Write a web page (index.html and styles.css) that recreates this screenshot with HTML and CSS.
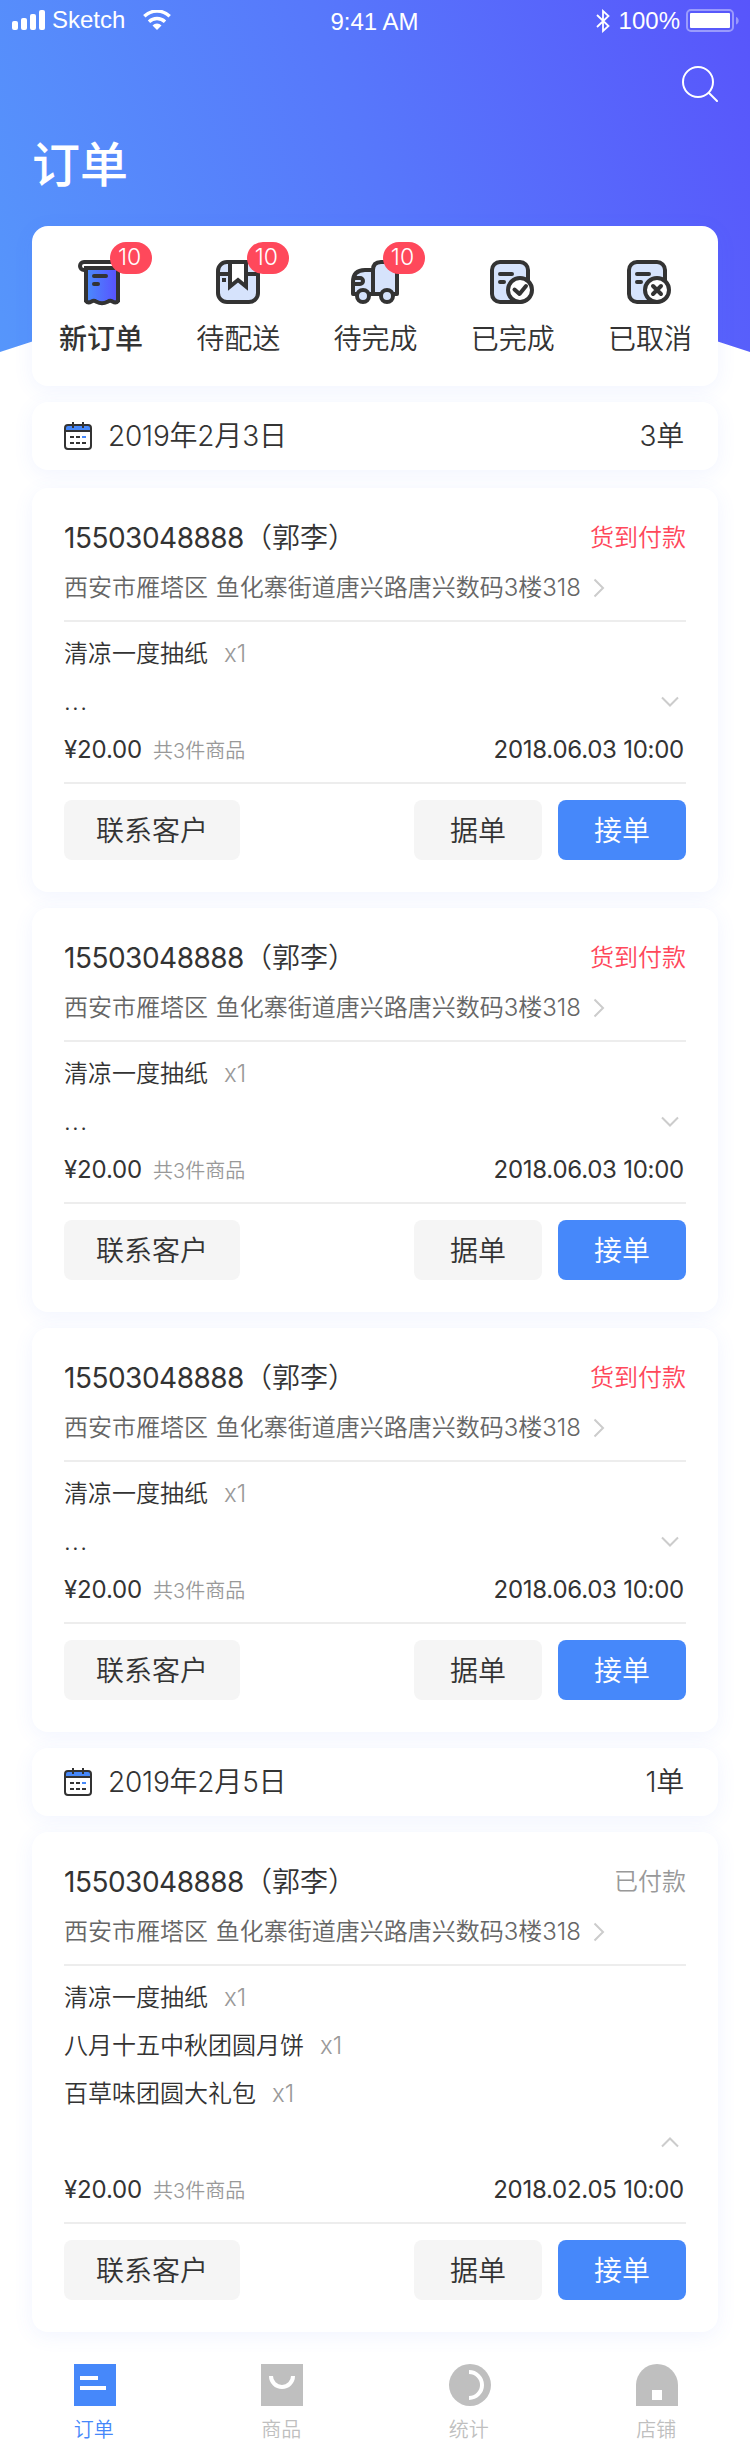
FILE: index.html
```
<!DOCTYPE html>
<html lang="zh-CN">
<head>
<meta charset="utf-8">
<title>订单</title>
<link rel="stylesheet" href="styles.css">
</head>
<body>
<svg class="defs" aria-hidden="true">
  <defs>
    <linearGradient id="paper" x1="0" y1="0" x2="1" y2="0"><stop offset="0" stop-color="#4a8cfb"/><stop offset="1" stop-color="#5950ff"/></linearGradient>
    <symbol id="calendar" viewBox="0 0 28 28">
      <rect x="1" y="3" width="26" height="24" rx="3" fill="#fff"/>
      <path d="M1 9V6a3 3 0 0 1 3-3h20a3 3 0 0 1 3 3v3z" fill="#4688fa"/>
      <path d="M1 9h26M9 0v6M19 0v6" stroke="#333" stroke-width="2"/>
      <rect x="1" y="3" width="26" height="24" rx="3" fill="none" stroke="#333" stroke-width="2"/>
      <path d="M6 15h4M12 15h4M6 21h4M12 21h4M18 21h4" stroke="#333" stroke-width="2"/>
      <path d="M18 15h4" stroke="#4688fa" stroke-width="2"/>
    </symbol>
    <symbol id="right" viewBox="0 0 12 20"><path d="M1.5 1.5L10 10l-8.500 8.500" fill="none" stroke="#ccc" stroke-width="2"/></symbol>
    <symbol id="down" viewBox="0 0 18 12"><path d="M1 1.500L9 9.500l8-8" fill="none" stroke="#ccc" stroke-width="2"/></symbol>
    <symbol id="up" viewBox="0 0 18 12"><path d="M1 10.500L9 2.500l8 8" fill="none" stroke="#ccc" stroke-width="2"/></symbol>
  </defs>
</svg>

<header class="header">
  <div class="status">
    <div class="status-left">
      <svg class="signal" viewBox="0 0 33 20" fill="#fff"><rect y="11" width="6" height="9" rx="2"/><rect x="9" y="8" width="6" height="12" rx="2"/><rect x="18" y="4" width="6" height="16" rx="2"/><rect x="27" width="6" height="20" rx="2"/></svg>
      <span class="carrier">Sketch</span>
      <svg class="wifi" viewBox="0 0 28 20"><path d="M1.300 6.300a18 18 0 0 1 25.400 0M6 11.700a11.500 11.500 0 0 1 16 0" fill="none" stroke="#fff" stroke-width="3.400"/><path d="M14 20l-4.500-4.600a6.500 6.500 0 0 1 9 0z" fill="#fff"/></svg>
    </div>
    <span class="clock">9:41 AM</span>
    <div class="status-right">
      <svg class="bluetooth" viewBox="0 0 14 24"><path d="M1 6l11.500 11L7 22V2l5.500 5L1 18" fill="none" stroke="#fff" stroke-width="1.800"/></svg>
      <span class="percent">100%</span>
      <svg class="battery" viewBox="0 0 53 24"><rect x="1" y="1" width="46" height="21" rx="4" fill="none" stroke="#fff" stroke-opacity=".4" stroke-width="2"/><rect x="4" y="4" width="40" height="15" rx="1" fill="#fff"/><path d="M50 8c3.600 1 3.600 6.500 0 7.500z" fill="#fff" fill-opacity=".4"/></svg>
    </div>
  </div>
  <svg class="search" viewBox="0 0 36 36"><circle cx="16" cy="16" r="15" fill="none" stroke="#fff" stroke-width="2"/><path d="M27 27l8 8" stroke="#fff" stroke-width="2" stroke-linecap="round"/></svg>
  <h1 class="title">订单</h1>
</header>

<main class="main">
  <section class="card tabs">
    <div class="tab active">
      <div class="tab-icon">
        <svg viewBox="0 0 44 46" width="44" height="46" fill="none" stroke="#333" stroke-width="4" stroke-linejoin="round" stroke-linecap="round">
          <rect x="2" y="2" width="40" height="8" rx="4" fill="#fff"/>
          <path d="M8 8v33q2 2.500 5.500.5 2.500-1.500 5 .3 5.500 3 11 0 2.500-1.800 5-.3 3.500 2 5.500-.5V8z" fill="url(#paper)" stroke-linejoin="miter"/>
          <path d="M16 16h12M16 24h4"/>
        </svg>
        <span class="badge">10</span>
      </div>
      <span class="tab-label">新订单</span>
    </div>
    <div class="tab">
      <div class="tab-icon">
        <svg viewBox="0 0 44 46" width="44" height="46" fill="none" stroke="#333" stroke-width="4">
          <rect x="2" y="2" width="40" height="40" rx="9" fill="#d6e3fc"/>
          <path d="M2 14h40"/><path d="M14 2v24.500l8-6.500 8 6.500V2z" fill="#fff"/>
          <rect x="6" y="18" width="4" height="4" fill="#333" stroke="none"/>
        </svg>
        <span class="badge">10</span>
      </div>
      <span class="tab-label">待配送</span>
    </div>
    <div class="tab">
      <div class="tab-icon wide">
        <svg viewBox="0 0 48 46" width="48" height="46" fill="none" stroke="#333" stroke-width="4" stroke-linejoin="round">
          <path d="M22 34H2V22Q2 10 14 10h8z" fill="#d6e3fc"/>
          <path d="M22 34V10q0-8 8-8h16v32z" fill="#d6e3fc"/>
          <path d="M2 18h7a3 3 0 0 1 0 6H2"/>
          <circle cx="12" cy="36" r="6" fill="#d6e3fc"/><circle cx="36" cy="36" r="6" fill="#d6e3fc"/>
        </svg>
        <span class="badge">10</span>
      </div>
      <span class="tab-label">待完成</span>
    </div>
    <div class="tab">
      <div class="tab-icon">
        <svg viewBox="0 0 44 46" width="44" height="46" fill="none" stroke="#333" stroke-width="4" stroke-linecap="round" stroke-linejoin="round">
          <rect x="2" y="2" width="36" height="40" rx="8" fill="#d6e3fc"/>
          <path d="M10 14h12M10 22h4"/><circle cx="30" cy="30" r="12" fill="#fff"/>
          <path d="M24.500 29.500l5 4.500 6.500-8"/>
        </svg>
      </div>
      <span class="tab-label">已完成</span>
    </div>
    <div class="tab">
      <div class="tab-icon">
        <svg viewBox="0 0 44 46" width="44" height="46" fill="none" stroke="#333" stroke-width="4" stroke-linecap="round" stroke-linejoin="round">
          <rect x="2" y="2" width="36" height="40" rx="8" fill="#d6e3fc"/>
          <path d="M10 14h12M10 22h4"/><circle cx="30" cy="30" r="12" fill="#fff"/>
          <path d="M26 26l8 8M34 26l-8 8"/>
        </svg>
      </div>
      <span class="tab-label">已取消</span>
    </div>
  </section>

  <section class="card day first-day">
    <svg class="cal"><use href="#calendar"/></svg><span class="day-date">2019年2月3日</span><span>3单</span>
  </section>

  <article class="card order">
    <div class="customer"><span><span class="phone">15503048888</span>（郭李）</span><span class="pay due">货到付款</span></div>
    <div class="address"><span>西安市雁塔区 鱼化寨街道唐兴路唐兴数码3楼318</span><svg class="arrow"><use href="#right"/></svg></div>
    <div class="details">
      <div class="row"><span>清凉一度抽纸</span><span class="qty">x1</span></div>
      <div class="row"><span class="more">...</span><svg class="fold"><use href="#down"/></svg></div>
      <div class="row"><span class="price">¥20.00</span><span class="count">共3件商品</span><time>2018.06.03 10:00</time></div>
    </div>
    <div class="actions"><button class="btn contact">联系客户</button><button class="btn">据单</button><button class="btn primary">接单</button></div>
  </article>

  <article class="card order">
    <div class="customer"><span><span class="phone">15503048888</span>（郭李）</span><span class="pay due">货到付款</span></div>
    <div class="address"><span>西安市雁塔区 鱼化寨街道唐兴路唐兴数码3楼318</span><svg class="arrow"><use href="#right"/></svg></div>
    <div class="details">
      <div class="row"><span>清凉一度抽纸</span><span class="qty">x1</span></div>
      <div class="row"><span class="more">...</span><svg class="fold"><use href="#down"/></svg></div>
      <div class="row"><span class="price">¥20.00</span><span class="count">共3件商品</span><time>2018.06.03 10:00</time></div>
    </div>
    <div class="actions"><button class="btn contact">联系客户</button><button class="btn">据单</button><button class="btn primary">接单</button></div>
  </article>

  <article class="card order">
    <div class="customer"><span><span class="phone">15503048888</span>（郭李）</span><span class="pay due">货到付款</span></div>
    <div class="address"><span>西安市雁塔区 鱼化寨街道唐兴路唐兴数码3楼318</span><svg class="arrow"><use href="#right"/></svg></div>
    <div class="details">
      <div class="row"><span>清凉一度抽纸</span><span class="qty">x1</span></div>
      <div class="row"><span class="more">...</span><svg class="fold"><use href="#down"/></svg></div>
      <div class="row"><span class="price">¥20.00</span><span class="count">共3件商品</span><time>2018.06.03 10:00</time></div>
    </div>
    <div class="actions"><button class="btn contact">联系客户</button><button class="btn">据单</button><button class="btn primary">接单</button></div>
  </article>

  <section class="card day">
    <svg class="cal"><use href="#calendar"/></svg><span class="day-date">2019年2月5日</span><span>1单</span>
  </section>

  <article class="card order">
    <div class="customer"><span><span class="phone">15503048888</span>（郭李）</span><span class="pay">已付款</span></div>
    <div class="address"><span>西安市雁塔区 鱼化寨街道唐兴路唐兴数码3楼318</span><svg class="arrow"><use href="#right"/></svg></div>
    <div class="details">
      <div class="row"><span>清凉一度抽纸</span><span class="qty">x1</span></div>
      <div class="row"><span>八月十五中秋团圆月饼</span><span class="qty">x1</span></div>
      <div class="row"><span>百草味团圆大礼包</span><span class="qty">x1</span></div>
      <div class="row"><svg class="fold"><use href="#up"/></svg></div>
      <div class="row"><span class="price">¥20.00</span><span class="count">共3件商品</span><time>2018.02.05 10:00</time></div>
    </div>
    <div class="actions"><button class="btn contact">联系客户</button><button class="btn">据单</button><button class="btn primary">接单</button></div>
  </article>
</main>

<nav class="nav">
  <a class="nav-item current"><svg class="nav-icon" viewBox="0 0 42 42"><path d="M0 0h42v42H0z" fill="#4688fa"/><path d="M6 14h18M6 24h26" stroke="#fff" stroke-width="4"/></svg><span>订单</span></a>
  <a class="nav-item"><svg class="nav-icon" viewBox="0 0 42 42"><path d="M0 0h42v42H0z" fill="#bfbfbf"/><path d="M10 12a11 11 0 0 0 22 0" fill="none" stroke="#fff" stroke-width="4"/></svg><span>商品</span></a>
  <a class="nav-item"><svg class="nav-icon" viewBox="0 0 42 42"><circle cx="21" cy="21" r="21" fill="#bfbfbf"/><path d="M20 8a13 13 0 0 1 0 26" fill="none" stroke="#fff" stroke-width="4"/></svg><span>统计</span></a>
  <a class="nav-item"><svg class="nav-icon" viewBox="0 0 42 42"><path d="M0 42V21a21 21 0 0 1 42 0v21z" fill="#bfbfbf"/><path d="M16 26h10v10H16z" fill="#fff"/></svg><span>店铺</span></a>
</nav>
</body>
</html>
```

FILE: styles.css
```
* { box-sizing: border-box; }
body {
  margin: 0;
  width: 750px;
  height: 2450px;
  background: #fff;
  color: #333;
  font: 350 28px/40px Inter, "Noto Sans CJK SC", sans-serif;
}
svg { display: block; flex: none; }
.defs { position: absolute; width: 0; height: 0; }

.header {
  display: flex;
  flex-direction: column;
  height: 352px;
  background: linear-gradient(70deg, #5696fb 0%, #5778fb 50%, #5855fb 100%);
  clip-path: polygon(0 0, 100% 0, 100% 100%, 50% 230px, 0 100%);
}
.status {
  display: grid;
  grid-template-columns: 1fr auto 1fr;
  align-items: center;
  height: 40px;
  padding: 0 11px 0 12px;
  color: #fff;
  font: 24px/28px "Liberation Sans", sans-serif;
}
.status-left, .status-right { display: flex; align-items: center; }
.status-right { justify-content: flex-end; padding-top: 1px; }
.signal { width: 33px; height: 20px; }
.carrier { margin-left: 7px; }
.wifi { width: 28px; height: 20px; margin-left: 18px; }
.clock { padding-top: 4px; margin-right: 2px; }
.bluetooth { width: 14px; height: 24px; margin-right: 9px; }
.battery { width: 53px; height: 24px; margin-left: 6px; }
.search { width: 36px; height: 36px; margin: 26px 32px 0 auto; }
.title { margin: 28px 0 0 32px; font-size: 48px; line-height: 70px; font-weight: 500; color: #fff; }

.main { display: flex; flex-direction: column; gap: 16px; margin-top: -126px; padding: 0 32px; }
.card {
  position: relative;
  background: #fff;
  border-radius: 16px;
  box-shadow: 0 4px 20px rgba(80, 110, 255, .08);
}
.tabs { display: grid; grid-template-columns: repeat(5, 1fr); height: 160px; padding-top: 34px; }
.tab { display: flex; flex-direction: column; align-items: center; gap: 13px; }
.tab.active { font-weight: 500; }
.tab-label { margin-left: 1px; }
.tab-icon { position: relative; width: 44px; }
.active .tab-icon { margin-left: -1px; }
.tab-icon.wide { width: 48px; }
.badge {
  position: absolute;
  left: 31px;
  top: -18px;
  width: 42px;
  height: 32px;
  border-radius: 16px;
  background: #ff485b;
  color: #fff;
  font-size: 23px;
  font-weight: 350;
  line-height: 31px;
  text-align: center;
  padding-right: 3px;
}
.active .badge, .wide .badge { left: 32px; }

.day { display: flex; align-items: center; height: 68px; padding: 0 34px 0 32px; letter-spacing: -.2px; }
.first-day { margin-bottom: 2px; }
.cal { width: 28px; height: 28px; }
.day-date { flex: 1; margin-left: 16px; }

.order { padding: 30px 32px 32px; }
.customer { display: flex; justify-content: space-between; align-items: center; height: 40px; }
.phone { font-weight: 400; letter-spacing: -.5px; }
.pay { font-size: 24px; color: #999; }
.due { color: #ff485b; }
.address { display: flex; align-items: center; height: 62px; padding-bottom: 2px; color: #666; font-size: 24px; word-spacing: 1px; }
.arrow { width: 12px; height: 20px; margin-left: 12px; }
.details { padding: 8px 0; border: solid #ededed; border-width: 2px 0; font-size: 24px; }
.row { display: flex; align-items: center; height: 48px; }
.qty { margin-left: 16px; color: #999; }
.more { letter-spacing: 1.300px; }
.fold { width: 18px; height: 12px; margin: 0 7px 0 auto; }
.price { font-weight: 400; letter-spacing: -.15px; }
.count { margin-left: 11px; color: #999; font-size: 20px; padding-top: 2px; }
.row time { margin: 0 2px 0 auto; font-weight: 400; letter-spacing: -.25px; }
.actions { display: flex; gap: 16px; margin-top: 16px; }
.btn {
  width: 128px;
  height: 60px;
  padding: 2px 0 0;
  border: 0;
  border-radius: 8px;
  background: #f5f5f5;
  color: #333;
  font: inherit;
}
.contact { width: 176px; margin-right: auto; }
.primary { background: #4688fa; color: #fff; }

.nav { display: grid; grid-template-columns: repeat(4, 1fr); height: 118px; padding-top: 32px; }
.nav-item { display: flex; flex-direction: column; align-items: center; gap: 9px; color: #bfbfbf; font-size: 20px; line-height: 30px; }
.nav-icon { width: 42px; height: 42px; margin-left: 2px; }
.current { color: #4688fa; }
```
